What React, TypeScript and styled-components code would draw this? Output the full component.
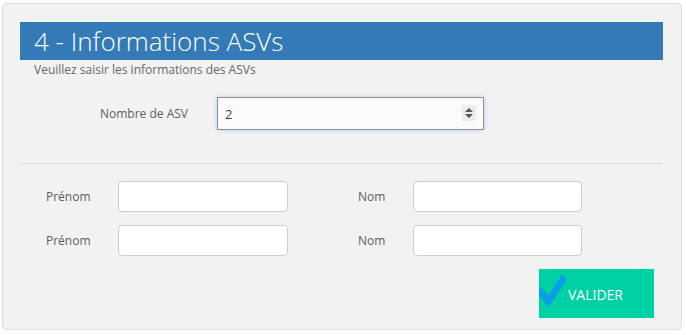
import React from "react";
import styled, { createGlobalStyle } from "styled-components";

const GlobalStyle = createGlobalStyle`
  body {
    margin: 0;
    background: #ffffff;
    font-family: "Open Sans", "Liberation Sans", sans-serif;
  }
`;

const Panel = styled.div`
  box-sizing: border-box;
  width: 680px;
  height: 327px;
  margin: 3px 0 0 2px;
  padding: 18px 18px 0 17px;
  border: 1px solid #dcdcdc;
  border-radius: 4px;
  background: #f2f2f2;
  display: flex;
  flex-direction: column;
`;

const Header = styled.div`
  height: 38px;
  background: #337ab7;
  color: #ffffff;
  font-size: 26px;
  font-weight: 300;
  line-height: 38px;
  padding-left: 14px;
`;

const Subtitle = styled.div`
  font-size: 12px;
  line-height: 16px;
  color: #666666;
  padding-left: 14px;
  margin-top: 2px;
`;

const NumberRow = styled.div`
  display: flex;
  align-items: center;
  margin-top: 19px;
  padding-left: 80px;
`;

const Label = styled.label<{ $width: number }>`
  width: ${(p) => p.$width}px;
  font-size: 12px;
  color: #5e5e5e;
`;

const NumberWrap = styled.div`
  position: relative;
  width: 267px;
  height: 33px;
`;

const NumberInput = styled.input`
  box-sizing: border-box;
  width: 100%;
  height: 100%;
  padding: 0 7px;
  border: 1px solid #8f8f8f;
  background: #fafafa;
  box-shadow: 0 0 5px rgba(102, 175, 233, 0.45);
  font-family: "Open Sans", sans-serif;
  font-size: 13px;
  color: #444444;
  outline: none;
`;

const Spinner = styled.div`
  position: absolute;
  right: 8px;
  top: 8px;
  width: 14px;
  height: 16px;
  background: #ececec;
  display: flex;
  align-items: center;
  justify-content: center;
`;

const Divider = styled.hr`
  width: 100%;
  margin: 33px 0 0;
  border: none;
  border-top: 1px solid #dddddd;
`;

const PersonGrid = styled.div`
  display: grid;
  grid-template-columns: 72px 170px 70px 55px 169px;
  row-gap: 13px;
  align-items: center;
  margin-top: 17px;
  padding-left: 26px;
`;

const Gap = styled.div``;

const TextInput = styled.input`
  box-sizing: border-box;
  width: 100%;
  height: 31px;
  border: 1px solid #cccccc;
  border-radius: 4px;
  background: #ffffff;
  outline: none;
`;

const Footer = styled.div`
  display: flex;
  justify-content: flex-end;
  margin-top: 13px;
  padding-right: 9px;
`;

const ValidateButton = styled.button`
  width: 115px;
  height: 49px;
  border: none;
  padding: 0;
  background: #00d1a4;
  color: #ffffff;
  font-family: "Open Sans", sans-serif;
  font-size: 14px;
  display: flex;
  align-items: flex-start;
  cursor: pointer;
`;

const ButtonText = styled.span`
  margin-top: 16px;
  margin-left: 1px;
`;

const Check = () => (
  <svg width="28" height="34" viewBox="0 0 28 34" style={{ marginTop: 4 }}>
    <path d="M0 13 L10 22 L23 1 L28 6 L10 34 L0 22 Z" fill="#0a9de8" />
  </svg>
);

const people = [1, 2];

export default function App() {
  return (
    <>
      <GlobalStyle />
      <Panel>
        <Header>4 - Informations ASVs</Header>
        <Subtitle>Veuillez saisir les informations des ASVs</Subtitle>
        <NumberRow>
          <Label $width={117}>Nombre de ASV</Label>
          <NumberWrap>
            <NumberInput type="text" value="2" readOnly />
            <Spinner>
              <svg width="8" height="12" viewBox="0 0 8 12">
                <path d="M4 1 L8 5 L0 5 Z" fill="#555" />
                <path d="M0 7 L8 7 L4 11 Z" fill="#555" />
              </svg>
            </Spinner>
          </NumberWrap>
        </NumberRow>
        <Divider />
        <PersonGrid>
          {people.map((n) => (
            <React.Fragment key={n}>
              <Label $width={72}>Prénom</Label>
              <TextInput />
              <Gap />
              <Label $width={55}>Nom</Label>
              <TextInput />
            </React.Fragment>
          ))}
        </PersonGrid>
        <Footer>
          <ValidateButton>
            <Check />
            <ButtonText>VALIDER</ButtonText>
          </ValidateButton>
        </Footer>
      </Panel>
    </>
  );
}
